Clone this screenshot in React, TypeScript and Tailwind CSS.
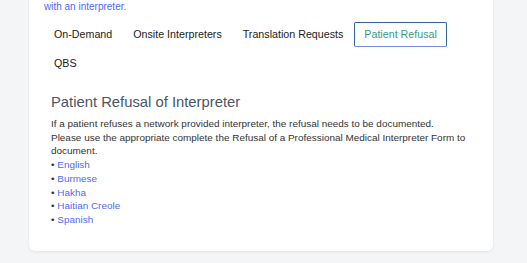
import React from 'react';

const tabs = ['On-Demand', 'Onsite Interpreters', 'Translation Requests', 'Patient Refusal', 'QBS'];
const languages = ['English', 'Burmese', 'Hakha', 'Haitian Creole', 'Spanish'];

const App: React.FC = () => {
  const active = 'Patient Refusal';

  return (
    <div
      className="w-[527px] h-[263px] overflow-hidden bg-[#f4f5f7]"
      style={{ fontFamily: '"Liberation Sans", Arial, sans-serif' }}
    >
      <div className="ml-[29px] w-[464px] h-[251px] bg-white rounded-b-[6px] shadow-[0_1px_3px_rgba(0,0,0,0.08)] pl-[15px] pr-[12px]">
        <p className="text-[10px] leading-[14px] text-[#4f6bef]">with an interpreter.</p>

        <div className="mt-[8px] flex flex-wrap gap-x-[1px] gap-y-[4px]">
          {tabs.map((t) => (
            <button
              key={t}
              className={`h-[25px] px-[9px] text-[10.7px] rounded-[2px] ${
                t === active
                  ? 'border border-[#2f6597] border-b-[#6f8fd8] text-[#3b9a84]'
                  : 'border border-transparent text-[#222]'
              }`}
            >
              {t}
            </button>
          ))}
        </div>

        <div className="pl-[7px] mt-[17px]">
          <h2 className="text-[14.8px] leading-[18px] text-[#4a5566]">Patient Refusal of Interpreter</h2>
          <div className="mt-[6px] text-[9.95px] leading-[13.7px] text-[#333]">
            <p>
              If a patient refuses a network provided interpreter, the refusal needs to be documented.
              <br />
              Please use the appropriate complete the Refusal of a Professional Medical Interpreter Form to
              document.
            </p>
            {languages.map((l) => (
              <div key={l}>
                • <a className="text-[#4f6bef]">{l}</a>
              </div>
            ))}
          </div>
        </div>
      </div>
    </div>
  );
};

export default App;
